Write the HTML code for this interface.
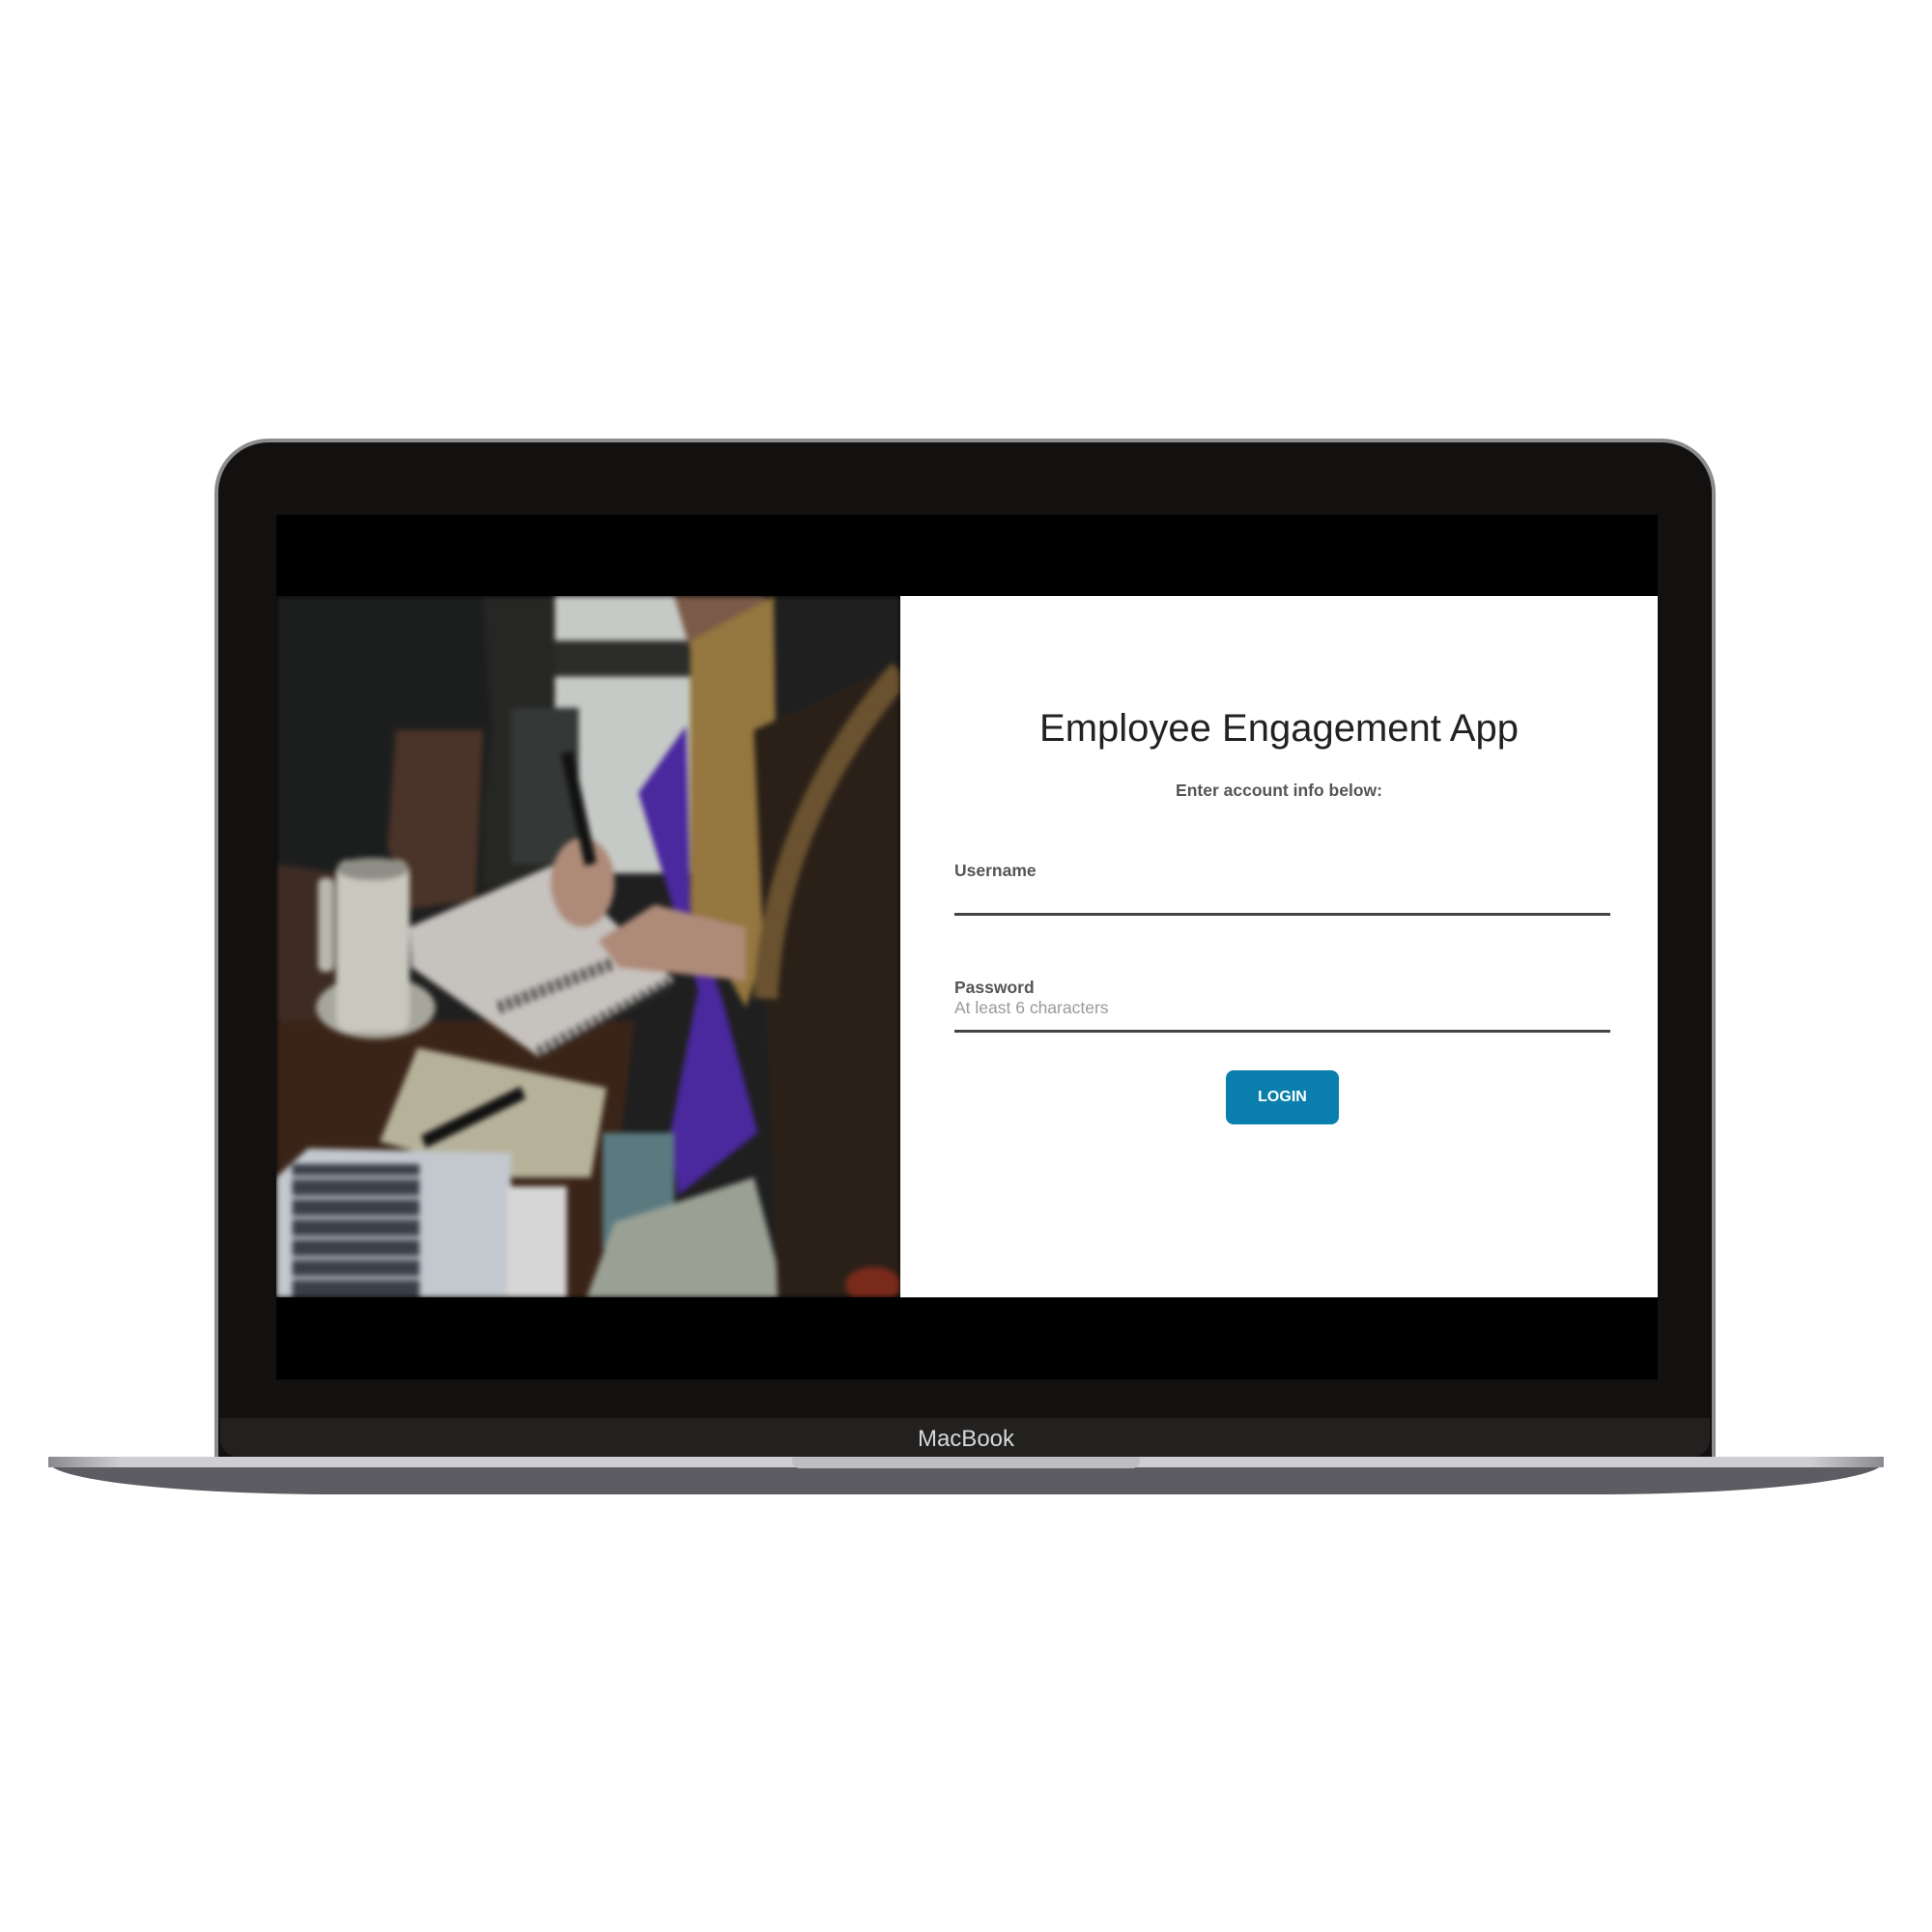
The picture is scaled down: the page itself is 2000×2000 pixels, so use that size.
<!DOCTYPE html>
<html><head><meta charset="utf-8"><style>
*{margin:0;padding:0;box-sizing:border-box}
body{width:2000px;height:2000px;background:#fff;position:relative;overflow:hidden;font-family:"Liberation Sans",sans-serif}
.abs{position:absolute}
</style></head><body>
<div class="abs" style="left:222px;top:454px;width:1554px;height:1060px;border-radius:56px 56px 0 0;background:#8c8c8e;"></div>
<div class="abs" style="left:226px;top:458px;width:1546px;height:1052px;border-radius:52px 52px 0 0;background:#121110;"></div>
<div class="abs" style="left:228px;top:1468px;width:1542px;height:40px;background:#222120;border-radius:0 0 18px 18px"></div>
<div class="abs" style="left:0;top:1478px;width:2000px;text-align:center;color:#d8d8d8;font-size:24px;line-height:24px;">MacBook</div>
<div class="abs" style="left:286px;top:533px;width:1430px;height:895px;background:#000"></div>
<div class="abs" style="left:932px;top:617px;width:784px;height:726px;background:#fff"></div>
<div class="abs" style="left:286px;top:617px;width:646px;height:726px;overflow:hidden">
<svg width="646" height="726" viewBox="0 0 1568 1568" preserveAspectRatio="none" style="filter:blur(3px)">
<rect width="1568" height="1568" fill="#1f1f1f"/>
<rect x="690" y="0" width="360" height="620" fill="#c6cac6"/>
<rect x="690" y="100" width="360" height="80" fill="#2c2c2a"/>
<rect x="520" y="0" width="180" height="650" fill="#262624"/>
<rect x="590" y="250" width="170" height="350" fill="#343836"/>
<path d="M0 0H520L540 300L500 650L0 700Z" fill="#1c1e1e"/>
<path d="M300 300L520 300L500 680L330 700L280 560Z" fill="#4a3328"/>
<path d="M0 600L320 640L330 900L100 1000L0 1000Z" fill="#3e2c24"/>
<path d="M0 950L900 950L820 1568L0 1568Z" fill="#3a2418"/>
<path d="M1000 0H1230L1200 180L1060 180Z" fill="#7a5a48"/>
<path d="M1040 100L1250 0L1260 700L1180 920L1040 700Z" fill="#94763e"/>
<path d="M910 440L1030 290L1040 700L1120 900L1210 1200L1010 1340L990 1200L1060 880Z" fill="#4a289e"/>
<path d="M335 740L700 600L1000 860L660 1030L340 830Z" fill="#c6c2be"/>
<path d="M560 920L850 820M660 1020L1000 860" stroke="#333" stroke-width="28" stroke-dasharray="10 12"/>
<ellipse cx="250" cy="920" rx="150" ry="70" fill="#a6a69c"/>
<rect x="150" y="590" width="185" height="385" rx="30" fill="#c8c8be"/>
<ellipse cx="242" cy="610" rx="90" ry="25" fill="#8e8e86"/>
<rect x="105" y="630" width="40" height="210" rx="15" fill="#b8b8ae"/>
<ellipse cx="770" cy="640" rx="80" ry="100" fill="#ae8a78"/>
<path d="M810 770L950 690L1180 740L1180 860L860 830Z" fill="#ae8a78"/>
<path d="M730 350L790 600" stroke="#111" stroke-width="30"/>
<path d="M260 1220L355 1010L830 1100L790 1300L600 1300Z" fill="#b6b29a"/>
<path d="M370 1220L620 1110" stroke="#111" stroke-width="30"/>
<path d="M820 1200L1000 1200L1000 1460L820 1460Z" fill="#5a7a80"/>
<path d="M780 1568L850 1400L1200 1300L1280 1568Z" fill="#9aa094"/>
<path d="M0 1300L80 1235L590 1245L590 1568L0 1568Z" fill="#c2c8ce"/>
<rect x="40" y="1270" width="320" height="298" fill="#3a4048"/>
<path d="M40 1300H360M40 1345H360M40 1390H360M40 1435H360M40 1480H360M40 1525H360" stroke="#aab0b8" stroke-width="10"/>
<rect x="580" y="1320" width="150" height="248" fill="#d6d6d6"/>
<path d="M1200 300L1568 150L1568 1568L1260 1568L1230 900Z" fill="#2a2018"/>
<path d="M1230 900Q1250 500 1568 170" stroke="#6a5230" stroke-width="60" fill="none"/>
<ellipse cx="1500" cy="1540" rx="70" ry="40" fill="#7a2a1a"/>
</svg></div>
<div class="abs" style="left:932px;top:731px;width:784px;text-align:center;font-size:40px;color:#222;line-height:46px;">Employee Engagement App</div>
<div class="abs" style="left:932px;top:808px;width:784px;text-align:center;font-size:17.5px;font-weight:bold;color:#555;line-height:20px;">Enter account info below:</div>
<div class="abs" style="left:988px;top:891px;font-size:17.5px;font-weight:bold;color:#555;line-height:20px;">Username</div>
<div class="abs" style="left:988px;top:945px;width:679px;height:3px;background:#444"></div>
<div class="abs" style="left:988px;top:1012px;font-size:17.5px;font-weight:bold;color:#555;line-height:20px;">Password</div>
<div class="abs" style="left:988px;top:1033px;font-size:17.5px;color:#999;line-height:20px;">At least 6 characters</div>
<div class="abs" style="left:988px;top:1066px;width:679px;height:3px;background:#444"></div>
<div class="abs" style="left:1269px;top:1108px;width:117px;height:56px;background:#0a7fae;border-radius:8px;color:#fff;font-weight:bold;font-size:16px;line-height:56px;text-align:center;">LOGIN</div>
<div class="abs" style="left:50px;top:1508px;width:1900px;height:39px;background:#5c5c62;border-radius:0 0 300px 300px / 0 0 34px 34px;"></div>
<div class="abs" style="left:50px;top:1508px;width:1900px;height:11px;background:linear-gradient(90deg,#8a8a8e,#cfcfd3 4%,#cfcfd3 96%,#8a8a8e);"></div>
<div class="abs" style="left:820px;top:1508px;width:360px;height:12px;background:#bdbdc2;border-radius:0 0 8px 8px"></div>
</body></html>
